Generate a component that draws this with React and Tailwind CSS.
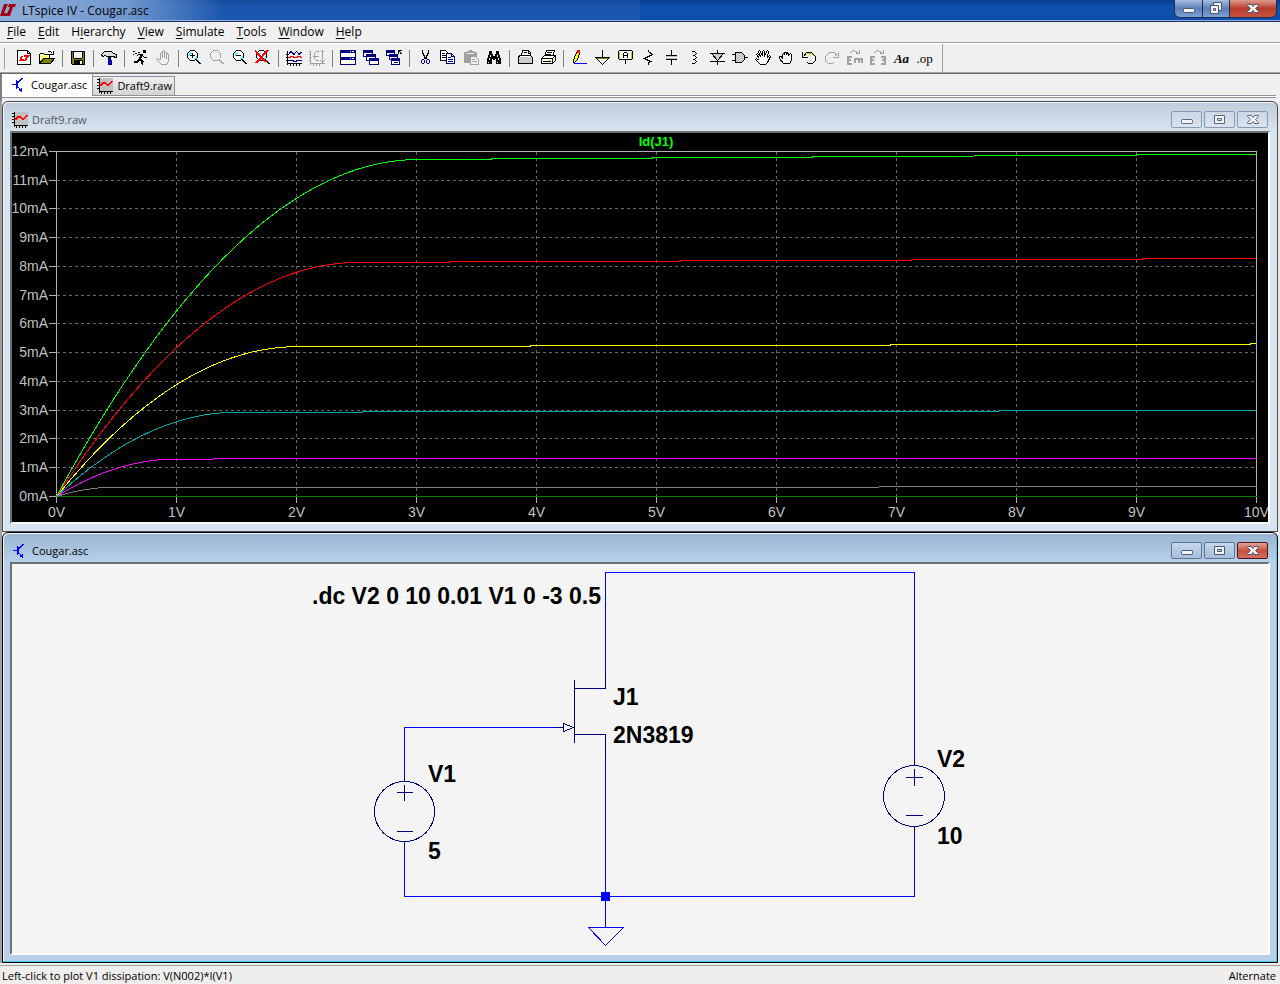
import { useState } from 'react';
import { clsx } from 'clsx';

const K = '#000';
const G = '#a0a0a0';
const N = '#000080';
const OLIVE = '#808000';

// Each icon is a list of [path, stroke, fill, strokeWidth] on a 16px grid
const LENS = 'M4.5 .5H8.5L11.5 3.5V7.5L8.5 10.5H4.5L1.5 7.5V3.5Z';
const ICONS = {
  new: [
    ['M1.5 .5H11.5L14.5 3.5V14.5H1.5Z', K, '#fff'],
    ['M11.5 .5V3.5H14.5', K],
    ['M3 11L5 6H7L6 9H8V11ZM8 11L10 7H8V5H14L13 7H12L10 11Z', 'none', '#f00'],
  ],
  open: [
    ['M.5 13.5V4.5L1.5 3.5H4.5L5.5 4.5H10.5V8.5', K, '#ffff80'],
    ['M.5 13.5L4.5 8.5H15.5L11.5 13.5Z', K, OLIVE],
    ['M8.5 2.5L9.5 1.5H11.5L13.5 3.5M14.5 1V4.5H11', K],
  ],
  save: [
    ['M1.5 1.5H14.5V14.5H2.5L1.5 13.5Z', K, OLIVE],
    ['M4 2H12V8H4Z', 'none', '#f0f0f0'],
    ['M3.5 2V7.5L4.5 8.5H11.5L12.5 7.5V2', K],
    ['M4 10H13V14H4Z', 'none', K],
    ['M10 11H12V14H10Z', 'none', '#f0f0f0'],
  ],
  hammer: [
    ['M.5 4.5L3.5 1.5H10.5L12.5 3.5L15.5 4.5V7.5L11.5 6.5H5.5L4.5 5.5L1.5 6.5Z', K, '#ddd'],
    ['M7 7H10V15H7Z', 'none', '#0000e0'],
    ['M6.5 7.5H10M7.5 8V10M10.5 10V15', K],
  ],
  run: [
    ['M11 0H14V3H11Z', 'none', K],
    ['M10.5 4L7.5 9L10.5 11.5L9.5 14.5M8 8.5L5.5 11.5H1.5', K, 'none', 2],
    ['M10 4.5H6.5L4.5 6.5M10.5 5.5L12.5 7.5H15', K],
    ['M1 1.5H3M3 3.5H5M1 4.5H2M6 2.5H8', K],
  ],
  halt: [
    ['M5.5 9.5V3.5L6.5 2.5L7.5 3.5V7.5V1.5L8.5 .5L9.5 1.5V7.5V2.5L10.5 1.5L11.5 2.5V8.5V4.5L12.5 3.5L13.5 4.5V11.5L11.5 14.5H6.5L1.5 9.5L2.5 8.5L5.5 10.5', G],
  ],
  zoomIn: [
    [LENS, K, '#fff'],
    ['M3 6V3H6M10 6V8H8', '#0ff'],
    ['M4 5.5H9M6.5 3V8', K],
    ['M10 9.5L14.5 14', K, 'none', 2],
  ],
  pan: [
    [LENS, G, '#f0f0f0'],
    ['M3 6V3H6M10 6V8H8', '#fff'],
    ['M10 9.5L14.5 14', G, 'none', 2],
  ],
  zoomOut: [
    [LENS, K, '#fff'],
    ['M3 6V3H6M10 6V8H8', '#0ff'],
    ['M4 5.5H9', K],
    ['M10 9.5L14.5 14', K, 'none', 2],
  ],
  zoomFit: [
    [LENS, K, '#fff'],
    ['M3 6V3H6M10 6V8H8', '#0ff'],
    ['M10 9.5L14.5 14', K, 'none', 2],
    ['M0 .5L11 12M13 0L1 13', '#f00', 'none', 2],
  ],
  plot: [
    ['M1.5 1V15M1 13.5H16M0 4.5H1M0 7.5H1M0 10.5H1M4.5 14V16M7.5 14V16M10.5 14V16M13.5 14V16', K],
    ['M2 5L5 1.5L8 4.5L10.5 1.5L13 4.5L15.5 2', N],
    ['M2 7.5H4L5 6.5H7L8 7.5H11L12 6.5H14L15 7.5H16', '#f00'],
    ['M2 10.5H7V11.5H10V10.5H16', N],
  ],
  plotBox: [
    ['M1.5 1V15M1 13.5H16M0 1.5H1M0 4.5H1M0 7.5H1M0 10.5H1M4.5 14V16M7.5 14V16M10.5 14V16', G],
    ['M9.5 1.5H7.5L5.5 3.5V8.5L7.5 10.5H9.5M13.5 1V12M11.5 2.5L13.5 .5L15.5 2.5M11.5 10.5L13.5 12.5L15.5 10.5M4 6.5H10', G],
  ],
  tile: [
    ['M.5 .5H15.5V14.5H.5Z', N, '#fff'],
    ['M1 1H15V3H1ZM1 7H15V10H1Z', 'none', N],
    ['M10 1.5H11M12 1.5H14M10 8.5H11M12 8.5H14', '#fff'],
  ],
  cascade: [
    ['M.5 .5H9.5V6.5H.5Z', N, '#fff'],
    ['M1 1H9V3H1Z', 'none', N],
    ['M3.5 4.5H12.5V10.5H3.5Z', N, '#fff'],
    ['M4 5H12V7H4Z', 'none', N],
    ['M6.5 8.5H15.5V14.5H6.5Z', N, '#fff'],
    ['M7 9H15V11H7Z', 'none', N],
  ],
  closeAll: [
    ['M.5 .5H8.5V5.5H.5Z', N, '#fff'],
    ['M1 1H8V3H1Z', 'none', N],
    ['M3.5 4.5H11.5V9.5H3.5Z', N, '#fff'],
    ['M4 5H11V7H4Z', 'none', N],
    ['M5.5 8.5H13.5V14.5H5.5Z', N, '#fff'],
    ['M6 9H13V11H6ZM8 12H12V13H8Z', 'none', N],
    ['M12.5 4V.5H16M12.5 .5L15.5 4', K],
  ],
  cut: [
    ['M5 0H6V3H7V5H8V7H9V5H10V3H11V0H12V4H11V6H10V8H9V9H8V8H7V6H6V4H5Z', 'none', K],
    ['M7.5 8.5L6.5 9.5M9.5 8.5L10.5 9.5M5.5 9.5H6.5L7.5 10.5V12.5L6.5 13.5H5.5L4.5 12.5V10.5ZM10.5 9.5H11.5L12.5 10.5V12.5L11.5 13.5H10.5L9.5 12.5V10.5Z', N],
  ],
  copy: [
    ['M.5 .5H5.5L8.5 3.5V10.5H.5Z', K, '#fff'],
    ['M2 3.5H5M2 5.5H7M2 7.5H7', K],
    ['M6.5 3.5H11.5L14.5 6.5V13.5H6.5Z', N, '#fff'],
    ['M11.5 4V6.5H14M8 7.5H11M8 9.5H13M8 11.5H13', N],
  ],
  paste: [
    ['M1 2H4V1H6V0H9V1H11V2H14V13H1Z', 'none', G],
    ['M4 3.5H11', '#f0f0f0'],
    ['M7.5 6.5H12.5L15.5 9.5V14.5H7.5Z', G, '#f0f0f0'],
    ['M9 9.5H12M9 11.5H14', G],
  ],
  find: [
    ['M3 1H6V4H7V6H9V4H10V1H13V4L15 9V14H10V9H9V10H7V9H6V14H1V9L3 4Z', 'none', K],
    ['M4.5 5V7M3.5 8V10M11.5 5V7M12.5 8V10M2.5 12V13M11.5 12V13', '#fff'],
  ],
  printSetup: [
    ['M4.5 5.5L5.5 .5H11.5L13.5 2.5V6.5', K, '#fff'],
    ['M2.5 5.5H13.5L15.5 7.5V13.5H1.5V7.5Z', K, '#ccc'],
    ['M7 3.5H11M3 6.5H13', '#fff'],
    ['M7 2.5H10M11.5 1V3.5H13', K],
  ],
  print: [
    ['M4.5 6.5L6.5 .5H14.5L12.5 6.5', K, '#fff'],
    ['M7 2.5H12M6 4.5H11', K],
    ['M1.5 8.5L4.5 5.5H15.5V10.5L12.5 13.5H1.5Z', K, '#fff'],
    ['M1 8.5H12.5V13M12.5 8.5L15.5 5.5M3 11.5H11', K],
    ['M8 10H11V11H8Z', 'none', '#ff0'],
  ],
  pencil: [
    ['M5 3H6V2H9V3H8V6H7V8H6V10H5V11H3V9H4V6H5Z', 'none', '#ff0'],
    ['M6 0H9V3H6Z', 'none', '#f00'],
    ['M5.5 2V4M4.5 4V6M3.5 6V9M2.5 9V13M3 12.5H4M4 11.5H5M5.5 10V11M6.5 8V10M7.5 5V8M8.5 3V5', K],
    ['M3 13.5H16', '#00f'],
  ],
  ground: [
    ['M8.5 0V7', K],
    ['M1.5 7.5H15.5L8.5 14.5Z', K, '#f0f0f0'],
    ['M3 8.5H14', OLIVE],
  ],
  label: [
    ['M1.5 1.5L2.5 .5H14.5L15.5 1.5V8.5L14.5 9.5H2.5L1.5 8.5Z', K, '#fff'],
    ['M2.5 1.5V8.5M14.5 1.5V8.5', '#cc0'],
    ['M6.5 8V3.5L7.5 2.5H9.5L10.5 3.5V8M7 5.5H10M8.5 10V14', K],
  ],
  resistor: [['M8.5 0V1.5L12.5 4.5L4.5 8.5L10.5 11.5L8.5 12.5V15', K]],
  capacitor: [
    ['M8.5 0V6M8.5 9V15M3 5.5H14M3 9.5H14', K],
    ['M3 6.5H14M3 8.5H14', '#c0c0c0'],
  ],
  inductor: [['M6 1.5H8.5L10.5 3.5L8.5 5.5H7M8.5 5.5L10.5 7.5L8.5 9.5H7M8.5 9.5L10.5 11.5L8.5 13.5H6', K]],
  diode: [
    ['M8.5 0V15M1 3.5H16M1 11.5H16', K],
    ['M2.5 3.5H14.5L8.5 10.5Z', K, '#ccc'],
  ],
  gate: [
    ['M3.5 2.5H9.5L12.5 5.5V9.5L9.5 12.5H3.5Z', K, '#ccc'],
    ['M0 4.5H3M0 10.5H3M13 7.5H16', K],
  ],
  move: [
    ['M4.5 8.5L1.5 4.5L2.5 3.5L5.5 6.5L3.5 1.5L4.5 .5L7.5 5.5V1.5L8.5 .5L9.5 1.5V6.5L11.5 1.5L12.5 .5L13.5 1.5L12.5 7.5L14.5 5.5L15.5 6.5L12.5 12.5L10.5 14.5H5.5L.5 9.5L1.5 8.5L4.5 10.5', K, '#fff'],
  ],
  drag: [
    ['M4.5 8.5V4.5L5.5 3.5L6.5 4.5V2.5H8.5V4.5L9.5 2.5L10.5 3.5V5.5L11.5 4.5L12.5 3.5L13.5 4.5V10.5L11.5 13.5H5.5L1.5 8.5V6.5H3.5Z', K, '#fff'],
  ],
  undo: [
    ['M2.5 6.5L5.5 2.5H10.5L14.5 6.5V10.5L11.5 13.5H7.5L6.5 12.5', K],
    ['M3.5 6.5L6.5 3.5H10.5L13.5 6.5', '#cc0'],
    ['M1.5 2V7.5H7', K],
  ],
  redo: [
    ['M13.5 6.5L10.5 2.5H5.5L1.5 6.5V10.5L4.5 13.5H8.5L9.5 12.5', G],
    ['M14.5 2V7.5H9', G],
  ],
  rotate: [
    ['M2.5 3.5L4.5 1.5L7.5 .5L11.5 3.5M12.5 0V3.5H9', G],
    ['M0 6H5V8H2V9H4V11H2V13H5V15H0ZM7 8H16V13H14V10H13V13H11V10H9V13H7Z', 'none', G],
  ],
  mirror: [
    ['M3.5 3.5L5.5 1.5L8.5 .5L12.5 3.5M13.5 0V3.5H10', G],
    ['M0 6H5V8H2V9H4V11H2V13H5V15H0ZM16 6H11V8H14V9H12V11H14V13H11V15H16Z', 'none', G],
  ],
  schematic: [['M1 7.5H5M5.5 3V12M6 6.5L11.5 1M6 8.5L10.5 14.5M10.5 11V14.5M8 13.5H11', '#00f'], ['M5 4H7V11H5Z', 'none', '#00f']],
  wave: [
    ['M2 0H16V13H2Z', 'none', '#c0c0c0'],
    ['M2.5 0V15M2 13.5H16M0 1.5H2M0 4.5H2M0 7.5H2M0 10.5H2M4.5 14V16M7.5 14V16M10.5 14V16M13.5 14V16', K],
    ['M3 8L6 4.5H8L10 6.5H12L15.5 3', '#f00', 'none', 2],
  ],
};

const TOOLBAR = [
  [['new', 'New Schematic'], ['open', 'Open']],
  [['save', 'Save']],
  [['hammer', 'Control Panel']],
  [['run', 'Run'], ['halt', 'Halt', true]],
  [['zoomIn', 'Zoom In'], ['pan', 'Pan', true], ['zoomOut', 'Zoom Out'], ['zoomFit', 'Zoom Full Extents']],
  [['plot', 'Pick Visible Traces'], ['plotBox', 'Autorange', true]],
  [['tile', 'Tile Windows'], ['cascade', 'Cascade Windows'], ['closeAll', 'Close All']],
  [['cut', 'Cut'], ['copy', 'Copy'], ['paste', 'Paste', true], ['find', 'Find']],
  [['printSetup', 'Print Setup'], ['print', 'Print']],
  [
    ['pencil', 'Wire'], ['ground', 'Ground'], ['label', 'Label Net'], ['resistor', 'Resistor'],
    ['capacitor', 'Capacitor'], ['inductor', 'Inductor'], ['diode', 'Diode'], ['gate', 'Component'],
    ['move', 'Move'], ['drag', 'Drag'], ['undo', 'Undo'], ['redo', 'Redo', true],
    ['rotate', 'Rotate', true], ['mirror', 'Mirror', true],
  ],
];

// [before, mnemonic, after]
const MENU = [
  ['', 'F', 'ile'], ['', 'E', 'dit'], ['H', 'i', 'erarchy'], ['', 'V', 'iew'],
  ['', 'S', 'imulate'], ['', 'T', 'ools'], ['', 'W', 'indow'], ['', 'H', 'elp'],
];

const TRACES = [
  { vgs: -3, color: '#008000' },
  { vgs: -2.5, color: '#808080' },
  { vgs: -2, color: '#ff00ff' },
  { vgs: -1.5, color: '#00a8a8' },
  { vgs: -1, color: '#ffff00' },
  { vgs: -0.5, color: '#ff0000' },
  { vgs: 0, color: '#00ff00' },
];

function Icon({ name }) {
  return (
    <svg width="16" height="16" viewBox="0 0 16 16" shapeRendering="crispEdges" className="shrink-0" aria-hidden="true">
      {ICONS[name].map(([d, stroke, fill = 'none', w = 1], i) => (
        <path key={i} d={d} stroke={stroke} fill={fill} strokeWidth={w} />
      ))}
    </svg>
  );
}

// 2N3819: beta = 1.304m, Vto = -3, lambda = 2.25m, Rd = Rs = 1
function drainCurrent(vgs, vds) {
  let id = 0;
  for (let i = 0; i < 20; i++) {
    const vg = vgs - id + 3;
    const vd = Math.max(vds - 2 * id, 0);
    const k = 1.304e-3 * (1 + 2.25e-3 * vd);
    if (vg <= 0) id = 0;
    else if (vd >= vg) id = k * vg * vg;
    else id = k * vd * (2 * vg - vd);
  }
  return id;
}

const px = (v) => 56.5 + v * 120;
const py = (mA) => 496.5 - mA * 28.75;
// grid line snapped to a pixel centre
const gridY = (mA) => Math.ceil(py(mA) - 1) + 0.5;

function tracePoints(vgs) {
  const pts = [];
  for (let v = 0; v <= 10.001; v += 0.05) {
    pts.push(`${px(v).toFixed(1)},${py(drainCurrent(vgs, v) * 1000).toFixed(2)}`);
  }
  return pts.join(' ');
}

function Plot() {
  const volts = Array.from({ length: 11 }, (_, i) => i);
  const amps = Array.from({ length: 13 }, (_, i) => i);
  return (
    <svg viewBox="12 133 1256 389" className="block h-auto w-full bg-black" role="img" aria-label="Id(J1)">
      <g shapeRendering="crispEdges" fill="none">
        {volts.slice(1, 10).map((v) => (
          <path key={v} d={`M${px(v)} 152V496`} stroke="#686868" strokeDasharray="3 3" />
        ))}
        {amps.slice(1, 12).map((a) => (
          <path key={a} d={`M57 ${gridY(a)}H1256`} stroke="#686868" strokeDasharray="3 3" />
        ))}
        <path d="M56.5 151.5H1256.5V496.5H56.5Z" stroke="#b0b0b0" />
        {volts.map((v) => <path key={v} d={`M${px(v)} 497V503`} stroke="#b0b0b0" />)}
        {amps.map((a) => <path key={a} d={`M49 ${gridY(a)}H56`} stroke="#b0b0b0" />)}
        {TRACES.map((t) => <polyline key={t.vgs} points={tracePoints(t.vgs)} stroke={t.color} />)}
      </g>
      <g className="font-['Liberation_Sans',sans-serif] text-[14px]" fill="#c0c0c0">
        {amps.map((a) => (
          <text key={a} x="48" y={gridY(a) + 4.5} textAnchor="end">{a}mA</text>
        ))}
        {volts.map((v) => (
          <text key={v} x={px(v)} y="517" textAnchor="middle">{v}V</text>
        ))}
        <text x="656" y="146" textAnchor="middle" fill="#00ff00" fontWeight="bold" className="text-[13px]">Id(J1)</text>
      </g>
    </svg>
  );
}

function Schematic() {
  return (
    <svg viewBox="12 564 1256 389" className="block h-auto w-full bg-[#f4f4f4]" role="img" aria-label="Cougar schematic">
      <g shapeRendering="crispEdges" fill="none" stroke="#0000ff">
        <path d="M605.5 673V572.5H914.5V758" />
        <path d="M404.5 774V727.5H556M404.5 849V896.5H914.5V834M605.5 758V927" />
        <path d="M588.5 927.5H623.5L605.5 945.5Z" />
        <rect x="601" y="892" width="9" height="9" fill="#0000ff" stroke="none" />
        <g stroke="#000080">
          <path d="M605.5 673V688.5H574M574.5 680V743M574 734.5H605.5V758M556 727.5H563" />
          <path d="M563.5 723.5L573.5 727.5L563.5 731.5Z" />
          <circle cx="404.5" cy="811.5" r="30" />
          <path d="M404.5 774V782M404.5 841V849M397 792.5H413M404.5 785V801M397 831.5H413" />
          <circle cx="914" cy="796" r="30.5" />
          <path d="M914.5 758V766M914.5 827V834M906 777.5H923M914.5 769V786M906 815.5H923" />
        </g>
      </g>
      <g className="font-['Liberation_Sans',sans-serif] text-[23px] font-bold" fill="#000">
        <text x="312" y="604">.dc V2 0 10 0.01 V1 0 -3 0.5</text>
        <text x="613" y="705">J1</text>
        <text x="613" y="743">2N3819</text>
        <text x="428" y="782">V1</text>
        <text x="428" y="859">5</text>
        <text x="937" y="767">V2</text>
        <text x="937" y="844">10</text>
      </g>
    </svg>
  );
}

function Glyph({ kind, ring = '#4a5570' }) {
  const line = { stroke: ring, fill: '#f4f4f4' };
  return (
    <svg width="14" height="13" viewBox="0 0 14 13" aria-hidden="true">
      {kind === 'min' && <rect x="1.5" y="6.5" width="11" height="4" rx="1" {...line} />}
      {kind === 'max' && <path d="M1.5 2.5h10v8h-10zM4.5 5.5h4v2h-4z" fillRule="evenodd" {...line} />}
      {kind === 'restore' && (
        <>
          <path d="M4.5 .5h8v8h-8z" {...line} />
          <path d="M1.5 3.5h8v8h-8zM4.5 6.5h2v2h-2z" fillRule="evenodd" {...line} />
        </>
      )}
      {kind === 'close' && (
        <path d="M1.5 2.5h4l1.5 2 1.5-2h4v1l-3 3 3 3v1h-4l-1.5-2-1.5 2h-4v-1l3-3-3-3z" {...line} />
      )}
    </svg>
  );
}

function ChildWindow({ title, icon, active, children }) {
  const btn = active
    ? 'border-[#5f7494] bg-linear-to-b from-[#c6d9ee] via-[#b4cbe4] to-[#a4c0de]'
    : 'border-[#8a9ab5] bg-linear-to-b from-[#cbd8e5] to-[#d7e3ef]';
  return (
    <section
      aria-label={title}
      className={clsx(
        'rounded-t-md border px-[7px] pb-[7px]',
        active
          ? 'border-black bg-linear-to-b from-[#99b4d1] to-[#b9d1ea] to-[30px] shadow-[inset_-1px_-1px_0_#3cc8e8,inset_1px_1px_0_#f0f6fc]'
          : 'border-[#4a4a4a] bg-linear-to-b from-[#bfcddb] to-[#d7e4f2] to-[30px] shadow-[inset_1px_1px_0_#f0f6fc]'
      )}
    >
      <header className="flex h-[29px] items-center justify-between pt-[5px] pr-[2px] pl-[2px]">
        <div className="flex items-center gap-1 pt-[2px]">
          <Icon name={icon} />
          <h2 className={clsx('text-[11px]', active ? 'text-black' : 'text-[#555]')}>{title}</h2>
        </div>
        <div className="flex gap-[2px]">
          {['min', 'max', 'close'].map((kind) => (
            <button
              key={kind}
              aria-label={kind}
              className={clsx(
                'flex h-[17px] w-[31px] items-center justify-center rounded-xs border',
                active && kind === 'close'
                  ? 'border-[#4a1420] bg-linear-to-b from-[#e5a498] via-[#c8503c] to-[#d0705c]'
                  : btn
              )}
            >
              <Glyph kind={kind} ring={active ? '#4a5570' : '#5c6678'} />
            </button>
          ))}
        </div>
      </header>
      <div className="border-2 border-t-[#707070] border-r-white border-b-white border-l-[#707070]">{children}</div>
    </section>
  );
}

export default function App() {
  const [tab, setTab] = useState('Cougar.asc');

  return (
    <div className="flex min-h-screen flex-col bg-[#f0f0f0] font-['Open_Sans','Noto_Sans',sans-serif] text-[12px] leading-4 text-black">
      <header className="flex h-[22px] items-start justify-between border-b border-[#1c2f5c] bg-linear-to-b from-[#083c8c] to-[#0f4fac] to-30% shadow-[inset_0_-1px_0_#8fb0e0]">
        <div className="flex h-[20px] w-1/2 items-center gap-[6px] bg-linear-to-r from-[#8fadd8] via-[#6f97cf] via-20% to-[#2a62b2]/40 to-35%">
          <svg width="16" height="12" viewBox="0 0 16 12" aria-hidden="true">
            <path d="M4 0H8L4 9H7L6 12H0ZM9 0H16L15 3H13L10 12H6L10 3H8Z" fill="#a00010" />
          </svg>
          <h1 className="pt-px text-[12px]">LTspice IV - Cougar.asc</h1>
        </div>
        <div className="mr-[3px] flex h-[18px] overflow-hidden rounded-b-md border border-t-0 border-[#1d2c50]">
          <button aria-label="Minimize" className="flex w-[28px] items-center justify-center border-r border-[#1d2c50] bg-linear-to-b from-[#a8bfe0] via-[#5c80b8] to-[#7ea2d4]">
            <Glyph kind="min" />
          </button>
          <button aria-label="Restore" className="flex w-[27px] items-center justify-center border-r border-[#1d2c50] bg-linear-to-b from-[#a8bfe0] via-[#5c80b8] to-[#7ea2d4]">
            <Glyph kind="restore" />
          </button>
          <button aria-label="Close" className="flex w-[46px] items-center justify-center bg-linear-to-b from-[#dc9a90] via-[#b83a28] to-[#c85440]">
            <Glyph kind="close" />
          </button>
        </div>
      </header>

      <nav className="flex h-[22px] items-start gap-3 border-b border-white pt-[2px] pl-[7px] shadow-[inset_0_-1px_0_#a0a0a0]">
        {MENU.map(([pre, key, post]) => (
          <button key={pre + key + post} className="text-[12px]">
            {pre}<span className="underline underline-offset-2">{key}</span>{post}
          </button>
        ))}
      </nav>

      <div role="toolbar" className="flex h-[30px] border-b border-[#696969] shadow-[inset_0_-1px_0_#a0a0a0]">
        <div className="my-1 mr-2 ml-1 w-px bg-[#a0a0a0]"></div>
        {TOOLBAR.map((group, i) => (
          <div key={i} className="flex">
            {i > 0 && <div className="mx-[3px] my-[6px] w-[2px] border-l border-[#808080]"></div>}
            {group.map(([name, label, disabled]) => (
              <button key={name} aria-label={label} disabled={disabled} className="flex w-[23px] items-start pt-[6px] pl-[3px]">
                <Icon name={name} />
              </button>
            ))}
          </div>
        ))}
        <button className="w-[23px] font-['Liberation_Serif',serif] text-[13px] font-bold italic">Aa</button>
        <button className="w-[23px] font-['Liberation_Serif',serif] text-[13px]">.op</button>
        <div className="ml-[6px] w-px bg-[#a0a0a0]"></div>
      </div>

      <div role="tablist" className="flex h-[27px] flex-col border-l-2 border-[#808080] pr-1">
        <div className="flex h-[22px] items-end border-b border-[#8c8e9a] pt-px">
          {[['Cougar.asc', 'schematic'], ['Draft9.raw', 'wave']].map(([name, icon]) => (
            <button
              key={name}
              role="tab"
              aria-selected={tab === name}
              onClick={() => setTab(name)}
              className={clsx(
                'flex items-center gap-1 border-[#8c8e9a] text-[11px]',
                tab === name
                  ? '-mb-px h-[22px] border-r bg-white pr-[5px] pl-[9px]'
                  : 'h-[19px] border-t border-r bg-linear-to-b from-[#f0f0f0] to-[#d4d4d4] pr-[2px] pl-[4px]'
              )}
            >
              <Icon name={icon} />
              {name}
            </button>
          ))}
        </div>
        <div className="h-[2px] border-b border-[#8c8e9a] bg-white"></div>
      </div>

      <main className="border-x-2 border-r-[#e8e8e8] border-l-[#a0a0a0]">
        <ChildWindow title="Draft9.raw" icon="wave">
          <Plot />
        </ChildWindow>
        <ChildWindow title="Cougar.asc" icon="schematic" active>
          <Schematic />
        </ChildWindow>
      </main>

      <footer className="mt-[2px] flex h-[18px] items-center justify-between border-t border-[#a0a0a0] bg-[#f0eded] pt-[2px] pr-1 pl-[2px] text-[11px]">
        <span>Left-click to plot V1 dissipation: V(N002)*I(V1)</span>
        <span>Alternate</span>
      </footer>
    </div>
  );
}
